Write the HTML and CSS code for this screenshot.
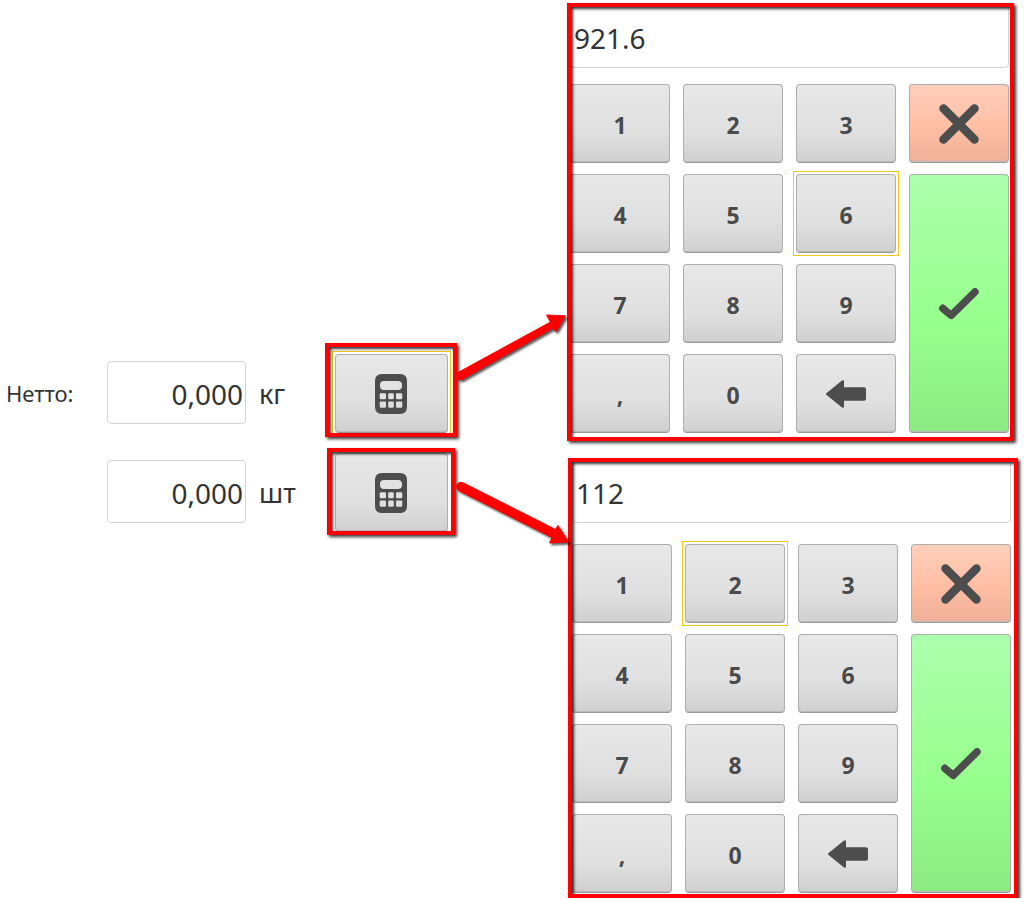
FILE: index.html
```html
<!DOCTYPE html>
<html lang="ru">
<head>
<meta charset="utf-8">
<meta name="viewport" content="width=device-width, initial-scale=1">
<title>Нетто</title>
<link rel="stylesheet" href="styles.css">
</head>
<body>
<svg class="sprite" aria-hidden="true">
  <symbol id="calc" viewBox="0 0 32 40">
    <path fill="#4d4d4d" fill-rule="evenodd" d="M7 0H25Q32 0 32 7V33Q32 40 25 40H7Q0 40 0 33V7Q0 0 7 0ZM9 7Q5 7 5 11V12Q5 16 9 16H23Q27 16 27 12V11Q27 7 23 7ZM6 19.300Q4.700 19.300 4.700 20.600V24Q4.700 25.300 6 25.300H9.700Q11 25.300 11 24V20.600Q11 19.300 9.700 19.300ZM14.500 19.300Q13.200 19.300 13.200 20.600V24Q13.200 25.300 14.500 25.300H17.500Q18.800 25.300 18.800 24V20.600Q18.800 19.300 17.500 19.300ZM22.300 19.300Q21 19.300 21 20.600V24Q21 25.300 22.300 25.300H26Q27.300 25.300 27.300 24V20.600Q27.300 19.300 26 19.300ZM6 27.500Q4.700 27.500 4.700 28.800V32.500Q4.700 33.800 6 33.800H9.700Q11 33.800 11 32.500V28.800Q11 27.500 9.700 27.500ZM14.500 27.500Q13.200 27.500 13.200 28.800V32.500Q13.200 33.800 14.500 33.800H17.500Q18.800 33.800 18.800 32.500V28.800Q18.800 27.500 17.500 27.500ZM22.300 27.500Q21 27.500 21 28.800V32.500Q21 33.800 22.300 33.800H26Q27.300 33.800 27.300 32.500V28.800Q27.300 27.500 26 27.500Z"/>
  </symbol>
  <symbol id="cross" viewBox="0 0 40 40">
    <path fill="none" stroke="#4d4d4d" stroke-width="8.500" stroke-linecap="round" d="M4.500 4.500 35.500 35.500M35.500 4.500 4.500 35.500"/>
  </symbol>
  <symbol id="check" viewBox="0 0 40 32">
    <path fill="none" stroke="#4d4d4d" stroke-width="7.500" stroke-linecap="round" stroke-linejoin="round" d="M3.800 20.300 12.300 27.300 36 3.800"/>
  </symbol>
  <symbol id="back" viewBox="0 0 40 28">
    <path fill="#4d4d4d" d="M.3 13.200 16 .500Q18 -.5 18 1.500V7.300H38Q40 7.300 40 9.300V18.700Q40 20.700 38 20.700H18V26.500Q18 28.500 16 27.500L.3 14.800Q-.3 14 .3 13.200Z"/>
  </symbol>
</svg>

<main class="page">
  <form class="weights">
    <div class="row">
      <div class="field field-low">
        <label class="caption" for="kg">Нетто:</label>
        <input class="amount" id="kg" type="text" value="0,000">
        <label class="unit" for="kg">кг</label>
      </div>
      <div class="marked mark-kg">
        <button class="btn icon calc focused" type="button" aria-label="Калькулятор, кг"><svg width="32" height="40"><use href="#calc"/></svg></button>
      </div>
    </div>
    <div class="row">
      <div class="field">
        <span class="caption"></span>
        <input class="amount" id="pcs" type="text" value="0,000">
        <label class="unit" for="pcs">шт</label>
      </div>
      <div class="marked mark-pcs">
        <button class="btn icon calc" type="button" aria-label="Калькулятор, шт"><svg width="32" height="40"><use href="#calc"/></svg></button>
      </div>
    </div>
  </form>

  <svg class="arrows" width="113" height="260" viewBox="457 300 113 260" aria-hidden="true">
    <g fill="#f00" stroke="#f00" stroke-linejoin="round">
      <path d="M458 372.500 550.500 322 546.500 315 565.500 315.800 556 331.500 552.500 328.500 462 379.500Q458.500 381 457 377.500 456 374 458 372.500Z"/>
      <path d="M462.500 482.500 555.500 529.500 557.800 525.500 568.500 542 549.500 543 552 537.500 458.500 490.500Q455.500 488 457 484.500 459 481.500 462.500 482.500Z"/>
    </g>
  </svg>

  <div class="pads">
    <section class="marked pad pad-kg">
      <input class="display" type="text" value="921.6" aria-label="Вес">
      <div class="keys">
        <button class="btn" type="button">1</button>
        <button class="btn" type="button">2</button>
        <button class="btn" type="button">3</button>
        <button class="btn icon cancel" type="button" aria-label="Отмена"><svg width="40" height="40"><use href="#cross"/></svg></button>
        <button class="btn" type="button">4</button>
        <button class="btn" type="button">5</button>
        <button class="btn focused" type="button">6</button>
        <button class="btn icon confirm" type="button" aria-label="Готово"><svg width="40" height="32"><use href="#check"/></svg></button>
        <button class="btn" type="button">7</button>
        <button class="btn" type="button">8</button>
        <button class="btn" type="button">9</button>
        <button class="btn" type="button">,</button>
        <button class="btn" type="button">0</button>
        <button class="btn icon" type="button" aria-label="Стереть"><svg width="40" height="28"><use href="#back"/></svg></button>
      </div>
    </section>
    <section class="marked pad pad-pcs">
      <input class="display" type="text" value="112" aria-label="Количество">
      <div class="keys">
        <button class="btn" type="button">1</button>
        <button class="btn focused" type="button">2</button>
        <button class="btn" type="button">3</button>
        <button class="btn icon cancel" type="button" aria-label="Отмена"><svg width="40" height="40"><use href="#cross"/></svg></button>
        <button class="btn" type="button">4</button>
        <button class="btn" type="button">5</button>
        <button class="btn" type="button">6</button>
        <button class="btn icon confirm" type="button" aria-label="Готово"><svg width="40" height="32"><use href="#check"/></svg></button>
        <button class="btn" type="button">7</button>
        <button class="btn" type="button">8</button>
        <button class="btn" type="button">9</button>
        <button class="btn" type="button">,</button>
        <button class="btn" type="button">0</button>
        <button class="btn icon" type="button" aria-label="Стереть"><svg width="40" height="28"><use href="#back"/></svg></button>
      </div>
    </section>
  </div>
</main>
</body>
</html>
```
FILE: styles.css
```css
* {
  box-sizing: border-box;
}

body {
  margin: 0;
  background: #fff;
  color: #333;
  font-family: "Noto Sans", "Open Sans", sans-serif;
}

.sprite {
  position: absolute;
  width: 0;
  height: 0;
}

.page {
  display: grid;
  grid-template-columns: 457px 110px minmax(0, 1fr);
  align-items: start;
}

/* Weight fields */
.weights {
  display: flex;
  flex-direction: column;
  gap: 11px;
  padding: 343px 0 0 6px;
}

.row {
  display: flex;
  align-items: center;
  justify-content: space-between;
}

.field {
  display: flex;
  align-items: center;
}

.field-low {
  padding-top: 4px;
}

.caption {
  width: 101px;
  padding-top: 2px;
  font-size: 22px;
  line-height: 30px;
}

.amount,
.display {
  height: 63px;
  border: 1px solid #d3d3d3;
  border-radius: 4px;
  background: #fff;
  color: #333;
  font: 28px "Noto Sans", "Open Sans", sans-serif;
  outline: 0;
}

.amount {
  width: 139px;
  padding: 3px 2px 0;
  text-align: right;
}

.unit {
  padding: 3px 0 0 13px;
  font-size: 27px;
  line-height: 38px;
}

/* Red highlight frame, drawn above its content */
.marked {
  position: relative;
}

.marked::after {
  content: "";
  position: absolute;
  inset: 0;
  border: 4px solid #f00;
  box-shadow: 2px 2px 3px rgba(0, 0, 0, .8), inset 2px 2px 3px rgba(0, 0, 0, .8);
  pointer-events: none;
}

.mark-kg {
  padding: 11px 9px 4px 10px;
}

.mark-pcs {
  margin-right: 2px;
  padding: 5px 7px 3px 8px;
}

/* Buttons */
.btn {
  position: relative;
  display: flex;
  align-items: center;
  justify-content: center;
  min-width: 0;
  height: 79px;
  padding: 2px 0 0;
  border: 1px solid #aeaeae;
  border-bottom-color: #999;
  border-radius: 4px;
  background: linear-gradient(#e8e8e8, #e0e0e0 60%, #d0d0d0);
  box-shadow: inset 0 -1px 0 #bbb;
  color: #4a4a4a;
  font: bold 23px "Noto Sans", "Open Sans", sans-serif;
}

.icon {
  padding: 0;
}

.calc {
  width: 113px;
  padding-right: 2px;
}

/* Square focus ring around a rounded button */
.focused::before {
  content: "";
  position: absolute;
  inset: -4px;
  border: 1px solid #f5c518;
}

.cancel {
  background: linear-gradient(#ffcfbb, #ffbea4 55%, #eeb098);
}

.confirm {
  grid-column: 4;
  grid-row: 2 / span 3;
  height: auto;
  background: linear-gradient(#adffad, #97ff8d 58%, #8cea83);
}

/* Keypads */
.arrows {
  position: relative;
  z-index: 1;
  margin-top: 300px;
  filter: drop-shadow(2px 2px 1px rgba(0, 0, 0, .65));
  overflow: visible;
}

.pads {
  display: flex;
  flex-direction: column;
  gap: 17px;
  padding-top: 3px;
}

.pad {
  display: flex;
  flex-direction: column;
}

.pad-kg {
  gap: 16px;
  margin-right: 16px;
  padding: 2px 5px 8px 3px;
}

.pad-pcs {
  gap: 21px;
  margin: 0 12px 0 1px;
  padding: 2px 7px 5px 4px;
}

.display {
  width: 100%;
  padding: 3px 3px 0;
}

.keys {
  display: grid;
  grid-template-columns: repeat(4, minmax(0, 1fr));
  gap: 11px 13px;
}
```
